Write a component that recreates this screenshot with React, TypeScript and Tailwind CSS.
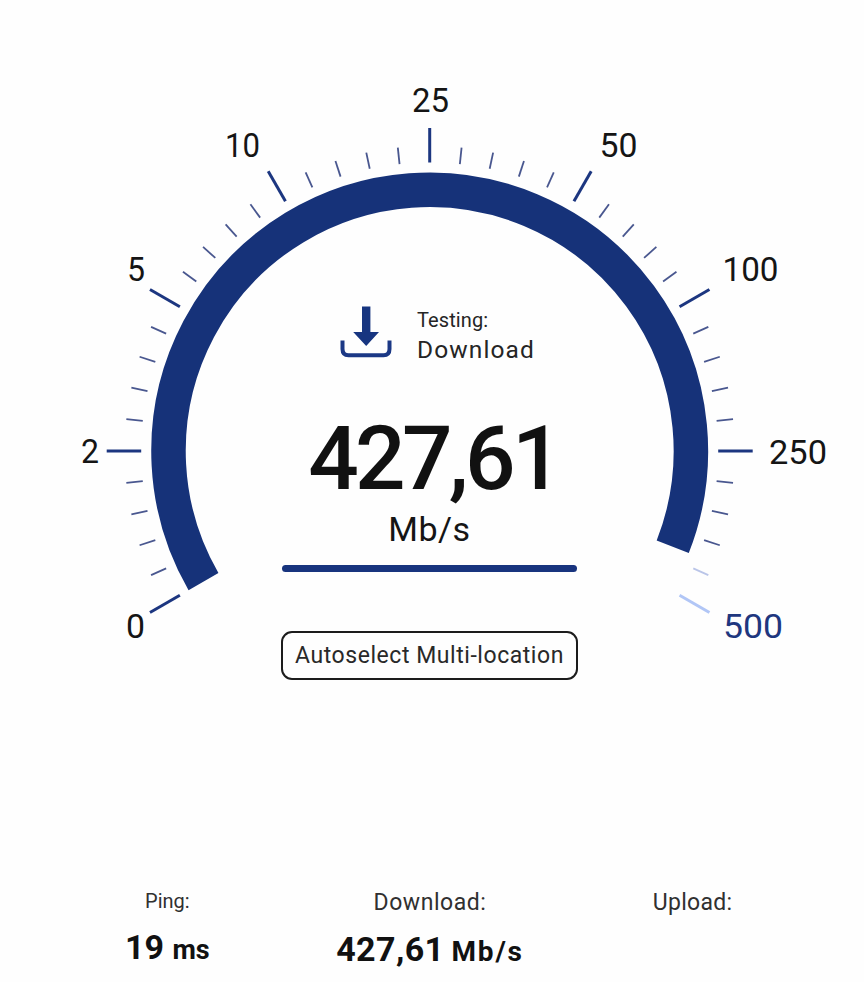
import React from "react";

interface ILabel {
  text: string;
  x: number;
  y: number;
  width: number;
}

const CENTER_X = 429.7;
const CENTER_Y = 451;
const RADIUS = 261.2;

const labels: ILabel[] = [
  { text: "0", x: 126, y: 637.5, width: 19 },
  { text: "2", x: 81, y: 463, width: 18 },
  { text: "5", x: 127, y: 281, width: 18 },
  { text: "10", x: 225, y: 157, width: 35 },
  { text: "25", x: 412, y: 111.5, width: 37 },
  { text: "50", x: 599.5, y: 157, width: 38 },
  { text: "100", x: 722.5, y: 281, width: 56 },
  { text: "250", x: 769, y: 463.5, width: 58 },
  { text: "500", x: 723, y: 637.5, width: 60 },
];

// angle is in degrees, clockwise from the right
const point = (angle: number, radius: number) => {
  const rad = (angle * Math.PI) / 180;
  return {
    x: CENTER_X + radius * Math.cos(rad),
    y: CENTER_Y + radius * Math.sin(rad),
  };
};

const Tick: React.FC<{ index: number }> = ({ index }) => {
  const major = index % 5 === 0;
  const reached = index < 39;
  const angle = 150 + index * 6;
  const from = point(angle, 288.5);
  const to = point(angle, major ? 323 : 305);
  const color = major
    ? reached ? "#1c3680" : "#b1c6f6"
    : reached ? "#49578f" : "#bac5e8";

  return (
    <line
      x1={from.x}
      y1={from.y}
      x2={to.x}
      y2={to.y}
      stroke={color}
      strokeWidth={major ? 3 : 1.8}
    />
  );
};

const Gauge: React.FC = () => {
  const start = point(150, RADIUS);
  const end = point(381.5, RADIUS);

  return (
    <svg
      className="col-start-1 row-start-1"
      width="864"
      height="700"
      viewBox="0 0 864 700"
    >
      <path
        d={`M${start.x} ${start.y}A${RADIUS} ${RADIUS} 0 1 1 ${end.x} ${end.y}`}
        fill="none"
        stroke="#163279"
        strokeWidth="34.5"
      />
      {[...new Array(41)].map((_, i) => <Tick key={i} index={i} />)}
      {labels.map(label => (
        <text
          key={label.text}
          x={label.x}
          y={label.y}
          textLength={label.width}
          lengthAdjust="spacingAndGlyphs"
          fontSize="33.5"
          fill={label.text === "500" ? "#1f377f" : "#151515"}
        >
          {label.text}
        </text>
      ))}
    </svg>
  );
};

const DownloadIcon: React.FC = () => (
  <svg width="52" height="52" viewBox="0 0 52 52">
    <path d="M22 .5h8.4V26H39L26.2 40 13.2 26H22z" fill="#173580" />
    <path
      d="M2.5 34.5V43q0 6.2 6 6.2h35q6 0 6-6.2v-8.5"
      fill="none"
      stroke="#1b3885"
      strokeWidth="4"
    />
  </svg>
);

const App: React.FC = () => {
  return (
    <main className="w-[864px] h-[982px] bg-[#fefefe] overflow-hidden text-[#151515] font-['Roboto','Liberation_Sans',sans-serif]">
      <section className="grid h-[700px]">
        <Gauge />
        <div className="col-start-1 row-start-1 w-[297px] ml-[281px] pt-[306px] flex flex-col items-center">
          <div className="flex w-full pl-[59px] gap-[25px] text-[#252525]">
            <DownloadIcon />
            <div className="whitespace-nowrap">
              <p className="text-[20px] leading-[28px] tracking-[0.1px]">Testing:</p>
              <p className="text-[24.5px] leading-[32px] tracking-[1.1px]">Download</p>
            </div>
          </div>
          <p className="mt-[49px] ml-[8px] text-[89px] leading-[88px] font-medium tracking-[-3.7px] whitespace-nowrap text-[#111]">
            427,61
          </p>
          <p className="mt-[6px] text-[34px] leading-[40px] tracking-[0.5px]">Mb/s</p>
          <div className="mt-[16px] w-[295px] h-[7px] rounded-full bg-[#18347e]" />
          <button className="mt-[59px] w-full h-[49px] border-2 border-[#1c1c1c] rounded-[11px] text-[23px] leading-none tracking-[0.55px] whitespace-nowrap text-[#292929]">
            Autoselect Multi-location
          </button>
        </div>
      </section>

      <section className="grid grid-cols-3 w-[788px] ml-9 mt-[186px] text-center whitespace-nowrap">
        <div>
          <p className="text-[20px] leading-[30px] text-[#303030]">Ping:</p>
          <p className="mt-[8px] text-[34px] leading-[46px] font-bold text-[#111]">
            19 <span className="text-[27px]">ms</span>
          </p>
        </div>
        <div>
          <p className="text-[23px] leading-[33px] tracking-[0.55px] text-[#303030]">Download:</p>
          <p className="mt-[7px] text-[34px] leading-[46px] font-bold tracking-[0.4px] text-[#111]">
            427,61<span className="ml-[7px] text-[28px] tracking-[1.8px]">Mb/s</span>
          </p>
        </div>
        <div>
          <p className="text-[23px] leading-[33px] tracking-[0.3px] text-[#303030]">Upload:</p>
        </div>
      </section>
    </main>
  );
};

export default App;
